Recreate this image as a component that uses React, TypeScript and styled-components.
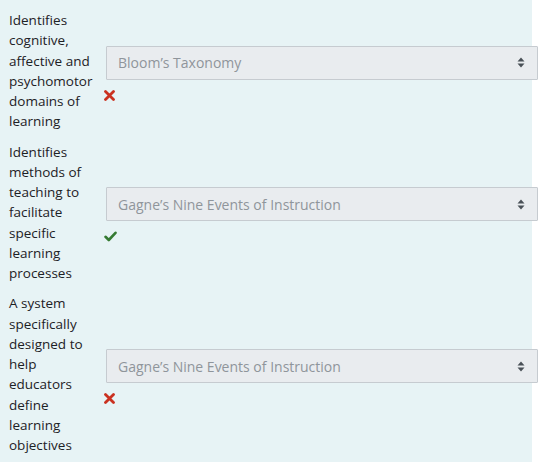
import React from 'react';
import styled, { createGlobalStyle } from 'styled-components';

const GlobalStyle = createGlobalStyle`
  body {
    margin: 0;
    background: #ffffff;
    font-family: 'Open Sans', 'Liberation Sans', sans-serif;
  }
`;

const Formulation = styled.div`
  width: 532px;
  background-color: #e7f3f5;
  padding: 10px 0 7px 9px;
  box-sizing: border-box;
  display: flex;
  flex-direction: column;
  gap: 10px;
`;

const Row = styled.div`
  display: grid;
  grid-template-columns: 94px auto;
  column-gap: 0;
  align-items: center;
`;

const Stem = styled.div`
  font-size: 13.5px;
  line-height: 20.25px;
  color: #1d2125;
  width: 93px;
`;

const Answer = styled.div`
  display: flex;
  flex-direction: column;
  align-items: flex-start;
  padding-left: 1px;
`;

const Select = styled.div`
  box-sizing: border-box;
  width: 432px;
  height: 34px;
  margin-left: 2px;
  padding: 0 12px 0 11px;
  display: flex;
  align-items: center;
  justify-content: space-between;
  background-color: #e9ecef;
  border: 1px solid #c6cbd0;
  border-radius: 1px;
  font-size: 14px;
  color: #8f959b;
`;

const Mark = styled.span`
  display: block;
  margin-top: 4px;
  height: 12px;
`;

const Arrows = () => (
  <svg width="8" height="11" viewBox="0 0 8 11">
    <path d="M4 0.5 L7.5 4.5 H0.5 Z" fill="#495057" />
    <path d="M4 10.5 L7.5 6.5 H0.5 Z" fill="#495057" />
  </svg>
);

const Cross = () => (
  <svg width="11" height="11" viewBox="0 0 11 11">
    <path
      d="M1.5 1.5 L9.5 9.5 M9.5 1.5 L1.5 9.5"
      stroke="#ca3120"
      strokeWidth="2.8"
      strokeLinecap="round"
    />
  </svg>
);

const Check = () => (
  <svg width="13" height="11" viewBox="0 0 13 11">
    <path
      d="M1.5 5.8 L4.8 9 L11.5 1.8"
      stroke="#357a32"
      strokeWidth="2.6"
      fill="none"
      strokeLinecap="round"
      strokeLinejoin="round"
    />
  </svg>
);

const items = [
  {
    stem: 'Identifies cognitive, affective and psychomotor domains of learning',
    choice: 'Bloom’s Taxonomy',
    correct: false,
  },
  {
    stem: 'Identifies methods of teaching to facilitate specific learning processes',
    choice: 'Gagne’s Nine Events of Instruction',
    correct: true,
  },
  {
    stem: 'A system specifically designed to help educators define learning objectives',
    choice: 'Gagne’s Nine Events of Instruction',
    correct: false,
  },
];

const App = () => (
  <>
    <GlobalStyle />
    <Formulation>
      {items.map((item, i) => (
        <Row key={i}>
          <Stem>{item.stem}</Stem>
          <Answer>
            <Select>
              <span>{item.choice}</span>
              <Arrows />
            </Select>
            <Mark>{item.correct ? <Check /> : <Cross />}</Mark>
          </Answer>
        </Row>
      ))}
    </Formulation>
  </>
);

export default App;
